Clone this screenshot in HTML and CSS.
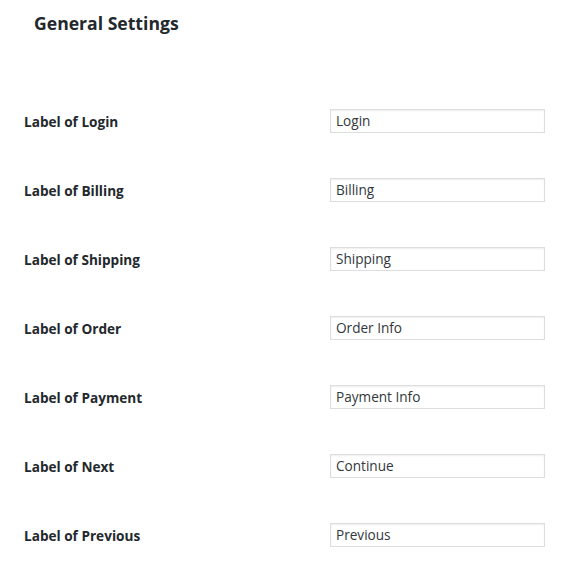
FILE: index.html
```html
<!DOCTYPE html>
<html>
<head>
<meta charset="utf-8">
<link rel="stylesheet" href="styles.css">
</head>
<body>
<div class="wrap">
  <h2 class="title">General Settings</h2>
  <div class="form">
    <div class="row"><label class="label">Label of Login</label><input class="field" type="text" value="Login"></div>
    <div class="row"><label class="label">Label of Billing</label><input class="field" type="text" value="Billing"></div>
    <div class="row"><label class="label">Label of Shipping</label><input class="field" type="text" value="Shipping"></div>
    <div class="row"><label class="label">Label of Order</label><input class="field" type="text" value="Order Info"></div>
    <div class="row"><label class="label">Label of Payment</label><input class="field" type="text" value="Payment Info"></div>
    <div class="row"><label class="label">Label of Next</label><input class="field" type="text" value="Continue"></div>
    <div class="row"><label class="label">Label of Previous</label><input class="field" type="text" value="Previous"></div>
  </div>
</div>
</body>
</html>
```

FILE: styles.css
```css
html, body {
  margin: 0;
  padding: 0;
  background: #fff;
}
body {
  font-family: "Open Sans", "Noto Sans", sans-serif;
  color: #23282d;
}
.wrap {
  padding: 0 0 0 24px;
}
.title {
  margin: 0;
  padding: 11px 0 0 10px;
  font-size: 17.6px;
  line-height: 24px;
  font-weight: 700;
  color: #23282d;
  height: 81px;
  box-sizing: border-box;
}
.form {
  display: flex;
  flex-direction: column;
}
.row {
  display: flex;
  align-items: center;
  height: 69px;
  padding-top: 10px;
  box-sizing: border-box;
}
.label {
  width: 306px;
  padding-top: 2px;
  font-size: 13.6px;
  font-weight: 700;
  line-height: 24px;
  color: #23282d;
}
.field {
  width: 215px;
  height: 24px;
  box-sizing: border-box;
  margin: 0;
  padding: 0 5px;
  border: 1px solid #ddd;
  box-shadow: inset 0 1px 2px rgba(0,0,0,0.07);
  font-family: "Open Sans", "Noto Sans", sans-serif;
  font-size: 13.6px;
  color: #32373c;
  background: #fff;
  outline: none;
}
```
